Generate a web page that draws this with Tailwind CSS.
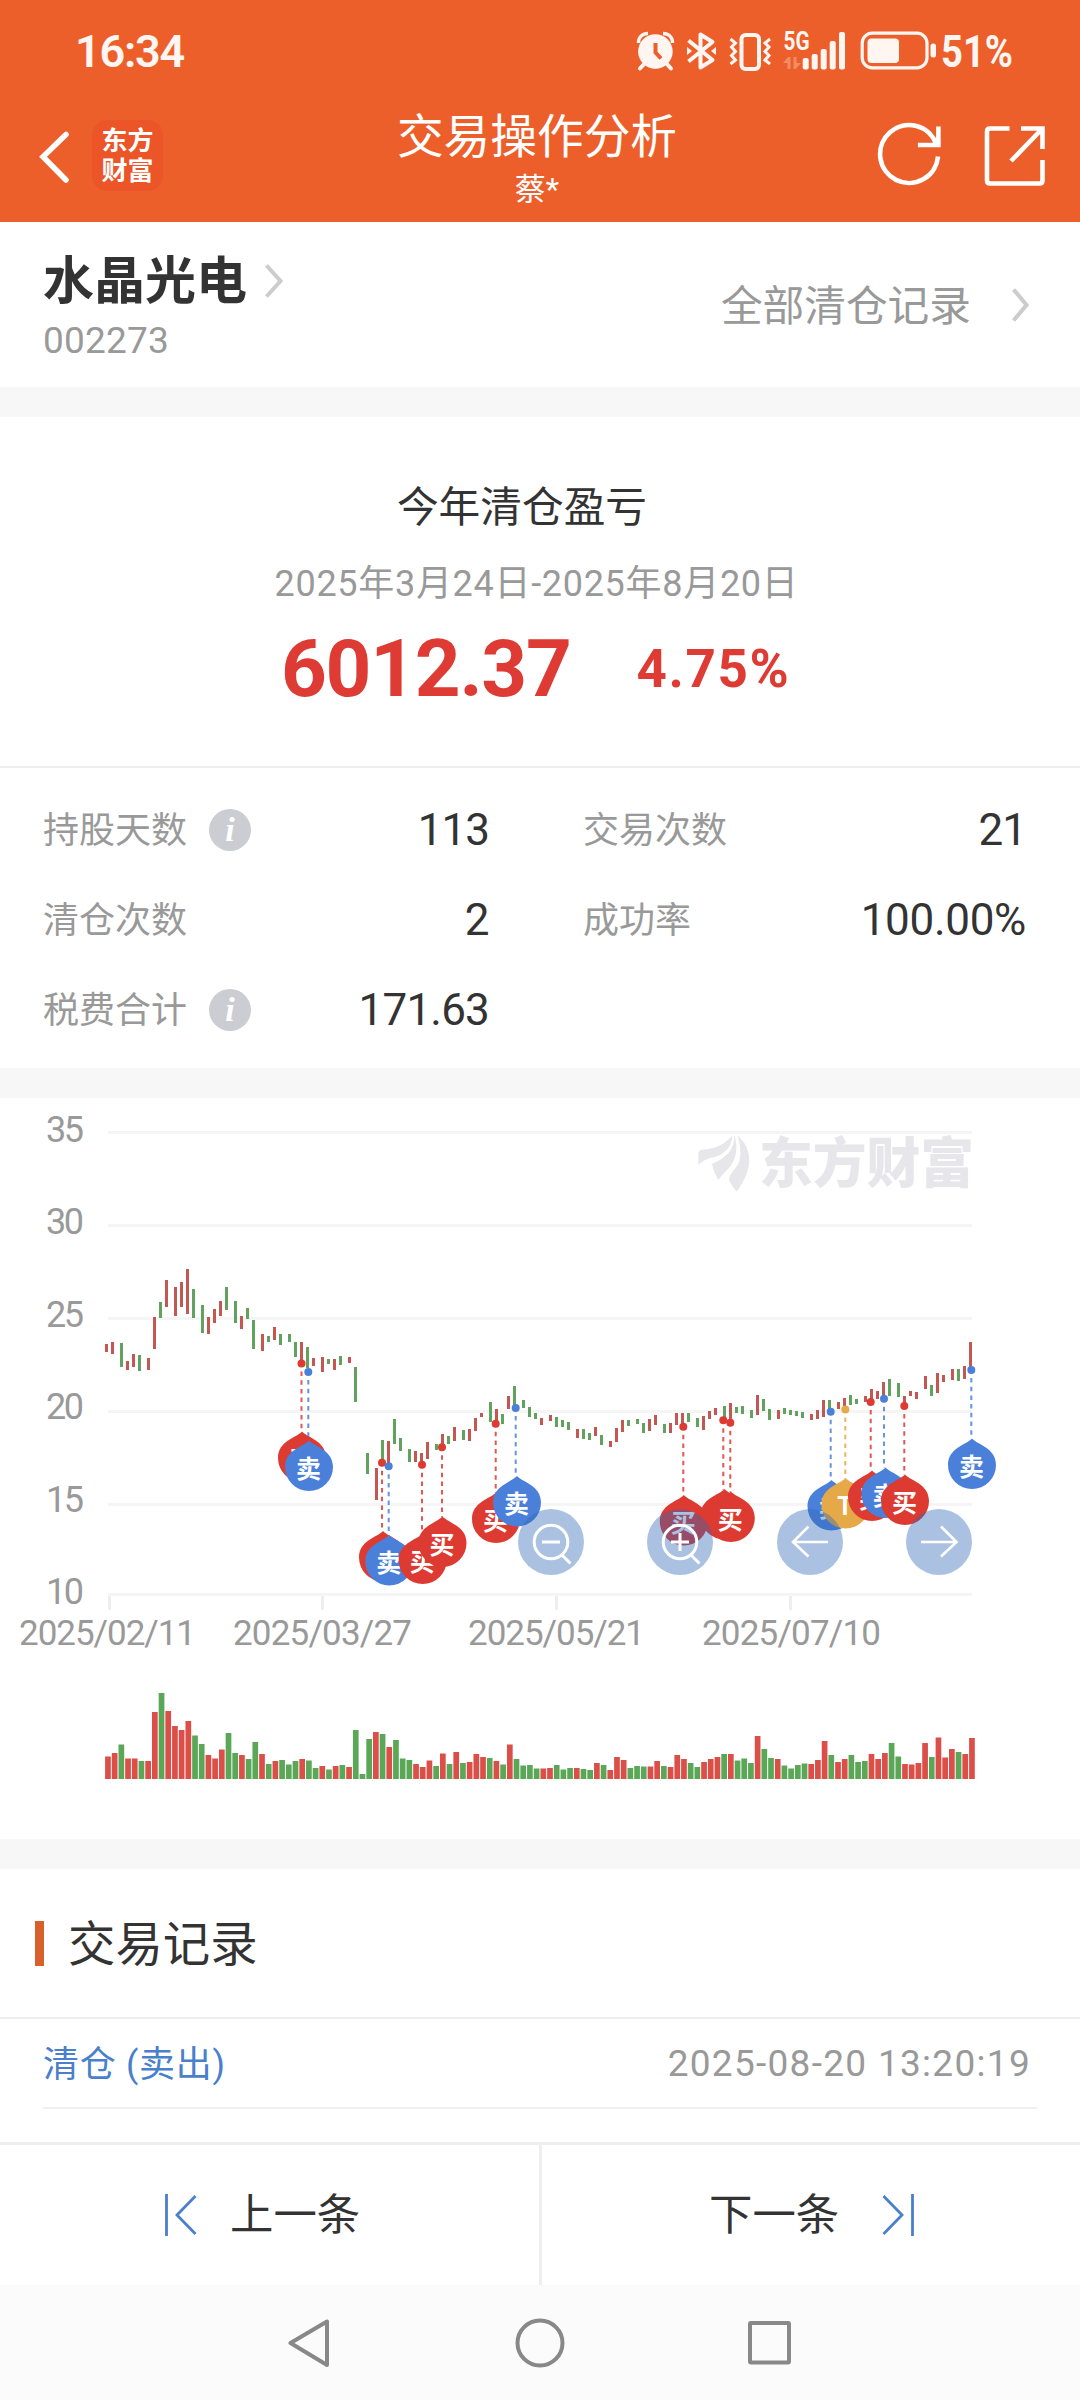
<!DOCTYPE html>
<html lang="zh-CN">
  <head>
    <meta charset="UTF-8" />
    <meta name="viewport" content="width=device-width, initial-scale=1.0" />
    <title>交易操作分析</title>
    <script src="https://cdn.jsdelivr.net/npm/@tailwindcss/browser@4"></script>
  </head>
  <body
    class="w-[1080px] h-[2400px] overflow-hidden flex flex-col bg-white text-[#333] font-['Roboto','Noto_Sans_CJK_SC',sans-serif]"
  >
    <!-- Header -->
    <header class="h-[222px] shrink-0 bg-[#ec5f2b] text-white flex flex-col">
      <div
        class="h-[102px] flex items-center justify-between pl-[75px] pr-[58px] text-[#fff6f2]"
      >
        <span class="text-[45px] leading-none font-semibold tracking-[-1.2px]"
          >16:34</span
        >
        <svg width="388" height="60" viewBox="634 21 388 60" fill="currentColor">
          <!-- alarm -->
          <circle cx="655.4" cy="51.5" r="17.3" />
          <path
            d="M638.5 43c0-6 4-9.500 9.500-9.500M672.500 43c0-6-4-9.500-9.500-9.500"
            fill="none"
            stroke="currentColor"
            stroke-width="3.500"
          />
          <path
            d="M645 63l-5 5.500M666 63l5 5.500"
            stroke="currentColor"
            stroke-width="4"
            stroke-linecap="round"
          />
          <path
            d="M655.5 43v9.500l5.500 6"
            fill="none"
            stroke="#ec5f2b"
            stroke-width="4"
          />
          <!-- bluetooth -->
          <path
            d="M688.500 40.500L712.500 60 700.500 67.500V34.500L712.500 42 688.500 61.500"
            fill="none"
            stroke="currentColor"
            stroke-width="4"
            stroke-linejoin="round"
          />
          <path d="M687 47v8l5-4zM716 47v8l-5-4z" />
          <!-- vibrate -->
          <rect
            x="741.500"
            y="35"
            width="17.500"
            height="34"
            rx="4"
            fill="none"
            stroke="currentColor"
            stroke-width="4"
          />
          <path
            d="M730.500 39l5 4-4 4 4 4.500-4 4 4 4.500-5 4M770 39l-5 4 4 4-4 4.500 4 4-4 4.500 5 4"
            fill="none"
            stroke="currentColor"
            stroke-width="3"
          />
          <!-- mobile signal -->
          <text
            x="783.500"
            y="50"
            font-size="25"
            font-weight="700"
            textLength="26"
            lengthAdjust="spacingAndGlyphs"
          >
            5G
          </text>
          <path
            d="M783 63l5-6h2.500v12h-3v-6zM793.500 57v12h2l5.500-6h-4.500v-6z"
            opacity=".3"
          />
          <rect x="802.700" y="58" width="6" height="11.500" rx="2" />
          <rect x="811.700" y="54" width="6" height="15.500" rx="2" />
          <rect x="820.700" y="49" width="6" height="20.500" rx="2" />
          <rect x="829.700" y="41" width="6" height="28.500" rx="2" />
          <rect x="839" y="32" width="6" height="37.500" rx="2" />
          <!-- battery -->
          <rect
            x="862.200"
            y="33.200"
            width="64.800"
            height="34.600"
            rx="10"
            fill="none"
            stroke="currentColor"
            stroke-width="3.200"
          />
          <rect x="867.500" y="38.500" width="31.500" height="24.500" rx="4" />
          <rect x="930.500" y="43.500" width="5.500" height="14" rx="2.500" />
          <text
            x="941"
            y="67"
            font-size="44"
            font-weight="700"
            textLength="72"
            lengthAdjust="spacingAndGlyphs"
          >
            51%
          </text>
        </svg>
      </div>
      <div class="flex-1 grid grid-cols-[380px_1fr_380px]">
        <div class="flex items-start pl-[38px]">
          <svg
            class="mt-[28px]"
            width="32"
            height="54"
            viewBox="38 130 32 54"
            fill="none"
            stroke="#fff"
            stroke-width="5.500"
            stroke-linecap="round"
          >
            <path d="M66 134.500L43 156.700l23 23.300" />
          </svg>
          <div
            class="mt-[18px] ml-[22px] size-[71px] rounded-[15px] bg-[#eb5528] flex flex-col items-center justify-center text-[26px] leading-[30px] font-bold"
          >
            <span>东方</span>
            <span>财富</span>
          </div>
        </div>
        <div class="flex flex-col items-center -ml-1.5">
          <h1 class="mt-[4px] text-[46.700px] leading-[62px] font-normal">
            交易操作分析
          </h1>
          <p class="text-[31px] leading-[44px]">蔡*</p>
        </div>
        <div class="flex justify-end pr-[32px] pt-[20px]">
          <svg
            width="172"
            height="68"
            viewBox="876 122 172 68"
            fill="none"
            stroke="#fff"
            stroke-width="4.600"
          >
            <path
              d="M938 156.500A29 29 0 1 1 936.500 144.500M938.400 126.500v18.500h-20.500"
            />
            <path
              d="M1009.500 128.500H990q-3 0-3 3v49q0 3 3 3h49.500q3 0 3-3v-20.500M1021 128.500h21.500v20.500M1042 129l-31 32"
            />
          </svg>
        </div>
      </div>
    </header>

    <!-- Stock -->
    <section
      class="h-[165px] shrink-0 flex items-center justify-between pl-[43px] pr-[51px]"
    >
      <div>
        <div class="flex items-center gap-[18px] pt-[4px]">
          <h2 class="text-[51px] leading-[62px] font-bold">水晶光电</h2>
          <svg
            class="-mt-[2px]"
            width="18"
            height="34"
            viewBox="0 0 18 34"
            fill="none"
            stroke="#ccc"
            stroke-width="4"
          >
            <path d="M1.500 1.500L15.500 17l-14 15.500" />
          </svg>
        </div>
        <p
          class="mt-[6px] text-[37px] leading-[44px] tracking-[0.200px] text-[#999]"
        >
          002273
        </p>
      </div>
      <a class="flex items-center gap-[41px] text-[#999]">
        <span class="pt-[4px] text-[41.700px] leading-[60px]"
          >全部清仓记录</span
        >
        <svg
          width="17"
          height="34"
          viewBox="0 0 17 34"
          fill="none"
          stroke="#ccc"
          stroke-width="4"
        >
          <path d="M1.500 1.500L14.500 17l-13 15.500" />
        </svg>
      </a>
    </section>
    <div class="h-[30px] shrink-0 bg-[#f7f7f7]"></div>

    <!-- Profit summary -->
    <section class="h-[351px] shrink-0 border-b-2 border-[#eee]">
      <h3
        class="mt-[61px] mr-[36px] text-center text-[41.700px] leading-[60px]"
      >
        今年清仓盈亏
      </h3>
      <p
        class="mt-[20px] mr-[7px] text-center text-[36px] leading-[52px] tracking-[0.700px] text-[#999]"
      >
        2025年3月24日-2025年8月20日
      </p>
      <div
        class="mt-[9px] pl-[281px] flex items-center gap-[66px] font-bold leading-[100px] text-[#dd3b33]"
      >
        <span class="text-[80px] tracking-[-1.3px]">6012.37</span>
        <span class="text-[53px] tracking-[1.6px]">4.75%</span>
      </div>
    </section>
    <section
      class="h-[300px] shrink-0 pt-[17px] pl-[43px] pr-[53px] grid grid-cols-[446px_443px] auto-rows-[90px] gap-x-[94px] text-[36px] text-[#999]"
    >
      <div class="flex items-center">
        <span class="pt-[2px]">持股天数</span>
        <svg class="ml-[22px] size-[42px]" viewBox="0 0 42 42">
          <circle cx="21" cy="21" r="21" fill="#cccdd2" />
          <text
            x="21"
            y="32"
            text-anchor="middle"
            font-family="Liberation Serif, serif"
            font-size="34"
            font-weight="700"
            font-style="italic"
            fill="#fff"
          >
            i
          </text>
        </svg>
        <span class="ml-auto text-[44px] tracking-[-1px] text-[#333]">113</span>
      </div>
      <div class="flex items-center justify-between">
        <span class="pt-[2px]">交易次数</span>
        <span class="text-[44px] tracking-[-1px] text-[#333]">21</span>
      </div>
      <div class="flex items-center justify-between">
        <span class="pt-[2px]">清仓次数</span>
        <span class="text-[44px] tracking-[-0.500px] text-[#333]">2</span>
      </div>
      <div class="flex items-center justify-between">
        <span class="pt-[2px]">成功率</span>
        <span class="text-[44px] tracking-[-0.300px] text-[#333]">100.00%</span>
      </div>
      <div class="flex items-center">
        <span class="pt-[2px]">税费合计</span>
        <svg class="ml-[22px] size-[42px]" viewBox="0 0 42 42">
          <circle cx="21" cy="21" r="21" fill="#cccdd2" />
          <text
            x="21"
            y="32"
            text-anchor="middle"
            font-family="Liberation Serif, serif"
            font-size="34"
            font-weight="700"
            font-style="italic"
            fill="#fff"
          >
            i
          </text>
        </svg>
        <span class="ml-auto text-[44px] tracking-[-0.800px] text-[#333]"
          >171.63</span
        >
      </div>
    </section>
    <div class="h-[30px] shrink-0 bg-[#f7f7f7]"></div>

    <!-- Chart -->
    <svg
      class="shrink-0 block"
      width="1080"
      height="741"
      viewBox="0 1098 1080 741"
    >
      <g stroke="#f5f5f5" stroke-width="3">
        <path
          d="M108 1132.500h864M108 1225.500h864M108 1318.500h864M108 1411.500h864M108 1504.500h864M108 1594.500h864"
        />
        <path
          stroke="#eee"
          d="M109.500 1596v14M322.500 1596v14M556.500 1596v14M790.500 1596v14"
        />
      </g>
      <g font-size="36" fill="#999" text-anchor="end">
        <text x="84" y="1142" textLength="38">35</text>
        <text x="84" y="1234" textLength="38">30</text>
        <text x="84" y="1326.500" textLength="38">25</text>
        <text x="84" y="1419" textLength="38">20</text>
        <text x="84" y="1511.500" textLength="38">15</text>
        <text x="84" y="1604" textLength="38">10</text>
      </g>
      <g font-size="35" fill="#999">
        <text x="19" y="1644.500" textLength="177">2025/02/11</text>
        <text x="233" y="1644.500" textLength="179">2025/03/27</text>
        <text x="468" y="1644.500" textLength="177">2025/05/21</text>
        <text x="702" y="1644.500" textLength="179">2025/07/10</text>
      </g>
      <!-- watermark -->
      <g fill="#e7e6eb">
        <g transform="translate(680 1100) scale(.3333 .3507)">
          <path
            d="M55 185V152q2-9 13-10C110 138 135 125 157 101 155 140 125 158 98 164 80 168 68 173 55 185z"
          />
          <path
            d="M163 100C165 140 140 165 96 182c4 18 10 33 19 46 10-16 25-26 35-38 24-27 22-65 13-90z"
          />
          <path
            d="M172 101c33 24 43 64 31 99-7 25-21 45-33 61-12-16-22-26-23-36 3-20 28-30 33-60 4-25-2-47-8-64z"
          />
        </g>
        <text
          x="759"
          y="1183"
          font-size="54"
          font-weight="900"
          textLength="215"
          lengthAdjust="spacingAndGlyphs"
        >
          东方财富
        </text>
      </g>
      <g id="candles"></g>
      <g id="volumes"></g>
      <g id="pins"></g>
      <!-- chart controls -->
      <g fill="#3268b6" fill-opacity=".41">
        <circle cx="551" cy="1542" r="33" />
        <circle cx="680" cy="1542" r="33" />
        <circle cx="810" cy="1542" r="33" />
        <circle cx="939" cy="1542" r="33" />
      </g>
      <g fill="none" stroke="#fff" stroke-width="3">
        <circle cx="551" cy="1542" r="16.800" />
        <path d="M542 1542h18M562 1555l8.500 8.500" />
        <circle cx="680" cy="1542" r="16.800" />
        <path d="M671 1542h18M680 1533v18M691 1555l8.500 8.500" />
        <path
          stroke-width="2.600"
          d="M828 1542h-35M808.500 1526.500l-15.500 15.500 15.500 14.500M921 1542h35M941 1526.500l15.500 15.500-15.500 14.500"
        />
      </g>
    </svg>
    <div class="h-[30px] shrink-0 bg-[#f7f7f7]"></div>

    <!-- Records -->
    <section class="h-[275px] shrink-0">
      <div
        class="h-[150px] flex items-center pl-[35px] gap-[24px] border-b-2 border-[#eee]"
      >
        <span class="w-[9px] h-[45px] bg-[#d8602b]"></span>
        <h3 class="pt-[3px] text-[47.400px] leading-[64px]">交易记录</h3>
      </div>
      <div
        class="mx-[43px] h-[90px] flex items-center justify-between border-b-2 border-[#f0f0f0] text-[36px]"
      >
        <span class="pt-[3px] tracking-[0.700px] text-[#4a7fcc]"
          >清仓 (卖出)</span
        >
        <span
          class="pt-[2px] pr-[6px] text-[37px] tracking-[1.300px] text-[#999]"
          >2025-08-20 13:20:19</span
        >
      </div>
    </section>
    <div
      class="h-[143px] shrink-0 -mt-[2px] grid grid-cols-[542px_1fr] border-t-3 border-[#eee] text-[43.400px]"
    >
      <button
        class="flex items-center gap-[33px] pl-[165px] border-r-3 border-[#eee]"
      >
        <svg
          width="32"
          height="42"
          viewBox="0 0 32 42"
          fill="none"
          stroke="#4a7fcc"
          stroke-width="2.800"
        >
          <path d="M1.500 0v42M30.500 2L12 21l18.500 19" />
        </svg>
        <span class="pt-[2px]">上一条</span>
      </button>
      <button class="flex items-center gap-[43px] pl-[167px]">
        <span class="pt-[2px]">下一条</span>
        <svg
          width="32"
          height="42"
          viewBox="0 0 32 42"
          fill="none"
          stroke="#4a7fcc"
          stroke-width="2.800"
        >
          <path d="M30.500 0v42M1.500 2L20 21 1.500 40" />
        </svg>
      </button>
    </div>

    <!-- System navigation -->
    <nav class="flex-1 bg-[#fbfbfb] flex justify-center pt-[33px]">
      <svg
        width="504"
        height="50"
        viewBox="288 2318 504 50"
        fill="none"
        stroke="#888"
        stroke-width="4"
        stroke-linejoin="round"
      >
        <path d="M327 2321.500v43.500L290.500 2343z" />
        <circle cx="540" cy="2343" r="22.500" />
        <rect x="750" y="2323" width="39" height="39.500" rx="1" />
      </svg>
    </nav>

    <script>
      // [direction, high, low, volume, volume direction if it differs]
      const days = [
        ["r", 1344, 1352, 22.5], ["r", 1342, 1354, 26], ["g", 1343, 1367, 34.5],
        ["r", 1361, 1370, 20.5], ["r", 1354, 1367, 20.5], ["g", 1355, 1371, 18],
        ["r", 1358, 1370, 18], ["r", 1317, 1349, 67], ["g", 1302, 1318, 86],
        ["r", 1280, 1307, 68], ["r", 1287, 1316, 53], ["r", 1282, 1307, 49],
        ["r", 1269, 1314, 58], ["g", 1289, 1318, 43.5], ["g", 1305, 1333, 35],
        ["r", 1317, 1334, 24], ["r", 1309, 1323, 20.5], ["r", 1301, 1316, 29.5],
        ["g", 1287, 1310, 46], ["g", 1301, 1323, 26], ["r", 1316, 1329, 24],
        ["g", 1308, 1319, 20], ["g", 1320, 1349, 37], ["r", 1334, 1351, 25],
        ["g", 1336, 1342, 15], ["r", 1327, 1340, 18], ["g", 1334, 1345, 19],
        ["g", 1334, 1342, 14.5], ["g", 1342, 1357, 18], ["r", 1342, 1362, 20],
        ["g", 1347, 1368, 18.5], ["r", 1358, 1366, 11, "g"], ["r", 1357, 1372, 13],
        ["g", 1359, 1364, 9.5], ["r", 1359, 1370, 13], ["g", 1356, 1365, 14],
        ["r", 1357, 1363, 12], ["g", 1367, 1402, 49], ["g", 0, 0, 5],
        ["g", 1453, 1474, 40], ["r", 1468, 1500, 47], ["g", 1440, 1462, 45],
        ["r", 1441, 1465, 32], ["g", 1419, 1444, 39], ["g", 1438, 1451, 20.5],
        ["g", 1449, 1462, 19], ["r", 1451, 1462, 15], ["r", 1453, 1463, 12],
        ["r", 1442, 1459, 18.5], ["g", 1444, 1450, 13], ["r", 1434, 1447, 25.5],
        ["g", 1436, 1444, 15], ["r", 1427, 1441, 27], ["g", 1430, 1440, 16],
        ["r", 1429, 1441, 17], ["r", 1418, 1431, 25], ["r", 1413, 1417, 22],
        ["g", 1402, 1422, 21], ["r", 1409, 1423, 18], ["g", 1414, 1424, 14.5],
        ["r", 1396, 1409, 34.5], ["g", 1386, 1407, 20], ["g", 1400, 1408, 13.5],
        ["g", 1407, 1417, 14], ["g", 1413, 1419, 10.5], ["r", 1418, 1425, 10.5],
        ["r", 1415, 1421, 11], ["g", 1417, 1427, 14], ["g", 1420, 1427, 9.5],
        ["g", 1422, 1430, 11], ["r", 1429, 1438, 11], ["g", 1429, 1439, 10],
        ["g", 1433, 1440, 9], ["r", 1427, 1436, 16], ["g", 1435, 1445, 14],
        ["r", 1441, 1447, 9], ["r", 1428, 1442, 22], ["r", 1420, 1432, 19],
        ["g", 1420, 1426, 11], ["g", 1419, 1424, 13], ["g", 1423, 1433, 12.5],
        ["r", 1419, 1431, 12.5], ["r", 1415, 1425, 18], ["g", 1424, 1433, 13],
        ["r", 1423, 1433, 12], ["r", 1413, 1425, 24], ["r", 1413, 1426, 20],
        ["g", 1413, 1422, 16], ["g", 1418, 1427, 12], ["r", 1416, 1430, 17],
        ["r", 1411, 1419, 20], ["r", 1408, 1415, 22], ["g", 1406, 1420, 25],
        ["r", 1403, 1422, 25], ["g", 1407, 1413, 18.5], ["g", 1406, 1414, 20.5],
        ["g", 1410, 1418, 16], ["r", 1395, 1415, 43], ["g", 1399, 1411, 30],
        ["g", 1409, 1420, 21], ["r", 1410, 1419, 20], ["g", 1408, 1414, 13.5],
        ["g", 1410, 1415, 10.5], ["g", 1411, 1416, 14], ["g", 1412, 1418, 15.5],
        ["r", 1414, 1420, 15], ["r", 1410, 1419, 19], ["r", 1400, 1417, 38],
        ["g", 1400, 1410, 24], ["r", 1402, 1409, 17], ["r", 1398, 1408, 20],
        ["g", 1395, 1405, 24], ["g", 1399, 1404, 17], ["r", 1396, 1402, 18, "g"],
        ["r", 1389, 1402, 25], ["r", 1391, 1399, 20], ["r", 1382, 1398, 26],
        ["g", 1379, 1396, 36], ["g", 1383, 1397, 22.5], ["r", 1396, 1405, 15],
        ["r", 1391, 1396, 14.5], ["r", 1392, 1399, 16], ["r", 1376, 1389, 36],
        ["g", 1385, 1396, 22], ["r", 1373, 1393, 41.5], ["r", 1375, 1382, 21.5],
        ["r", 1369, 1380, 30], ["g", 1369, 1381, 27], ["r", 1366, 1379, 25],
        ["r", 1342, 1370, 41],
      ];
      // [dot x, dot y, pin x, pin y, type]
      const trades = [
        [301.5, 1363.5, 302, 1458, "买"],
        [308.3, 1372, 309, 1467, "卖"],
        [382, 1462.7, 383, 1557.5, "买"],
        [388.7, 1466.3, 389.3, 1561.5, "卖"],
        [422, 1464.7, 422.7, 1560, "买"],
        [442, 1447.3, 442.5, 1543, "买"],
        [495.7, 1423.7, 496, 1519, "买"],
        [515.7, 1408, 517, 1502.5, "卖"],
        [683.3, 1426.7, 683.8, 1521.5, "买"],
        [723.3, 1420.2, 724.5, 1515.5, "买"],
        [730.3, 1422.7, 730.8, 1518, "买"],
        [830.7, 1411.8, 831.5, 1506.5, "卖"],
        [845.3, 1409.4, 845.5, 1504.5, "T"],
        [870.7, 1402, 872, 1497, "买"],
        [884, 1398.8, 885.5, 1494, "卖"],
        [904.3, 1405.9, 905, 1501, "买"],
        [971.3, 1370, 972, 1465, "卖"],
      ];
      const step = 864 / 129;
      const candleColor = { r: "#c45751", g: "#61a35e" };
      const volumeColor = { r: "#db4f48", g: "#5aa857" };
      const pinColor = { 买: "#dd3a32", 卖: "#4a80da", T: "#e6a947" };

      document.getElementById("candles").innerHTML = days
        .map(([dir, high, low], i) => {
          const x = 105 + Math.floor((i * step + 2.25) / 3) * 3;
          return `<rect x="${x}" y="${high}" width="3" height="${low - high}" fill="${candleColor[dir]}"/>`;
        })
        .join("");

      document.getElementById("volumes").innerHTML = days
        .map(([dir, , , vol, volDir], i) => {
          const x = 105.1 + i * step;
          return `<rect x="${x}" y="${1779 - vol}" width="5.700" height="${vol}" fill="${volumeColor[volDir || dir]}"/>`;
        })
        .join("");

      document.getElementById("pins").innerHTML =
        trades
          .map(
            ([dx, dy, , py, type]) =>
              `<path d="M${dx} ${dy + 8}V${py - 26}" stroke="${pinColor[type]}" stroke-opacity=".85" stroke-width="2" stroke-dasharray="4.500 4.200"/>
              <circle cx="${dx}" cy="${dy}" r="4" fill="${pinColor[type]}"/>`
          )
          .join("") +
        trades
          .map(
            ([, , px, py, type]) =>
              `<g transform="translate(${px} ${py})">
                <path d="M0-26.500C6-20 24-17 24 0A24 24 0 0 1-24 0C-24-17-6-20 0-26.500z" fill="${pinColor[type]}"/>
                <text x="-.5" y="10.500" text-anchor="middle" font-size="25" font-weight="700" fill="#fff">${type}</text>
              </g>`
          )
          .join("");
    </script>
  </body>
</html>
